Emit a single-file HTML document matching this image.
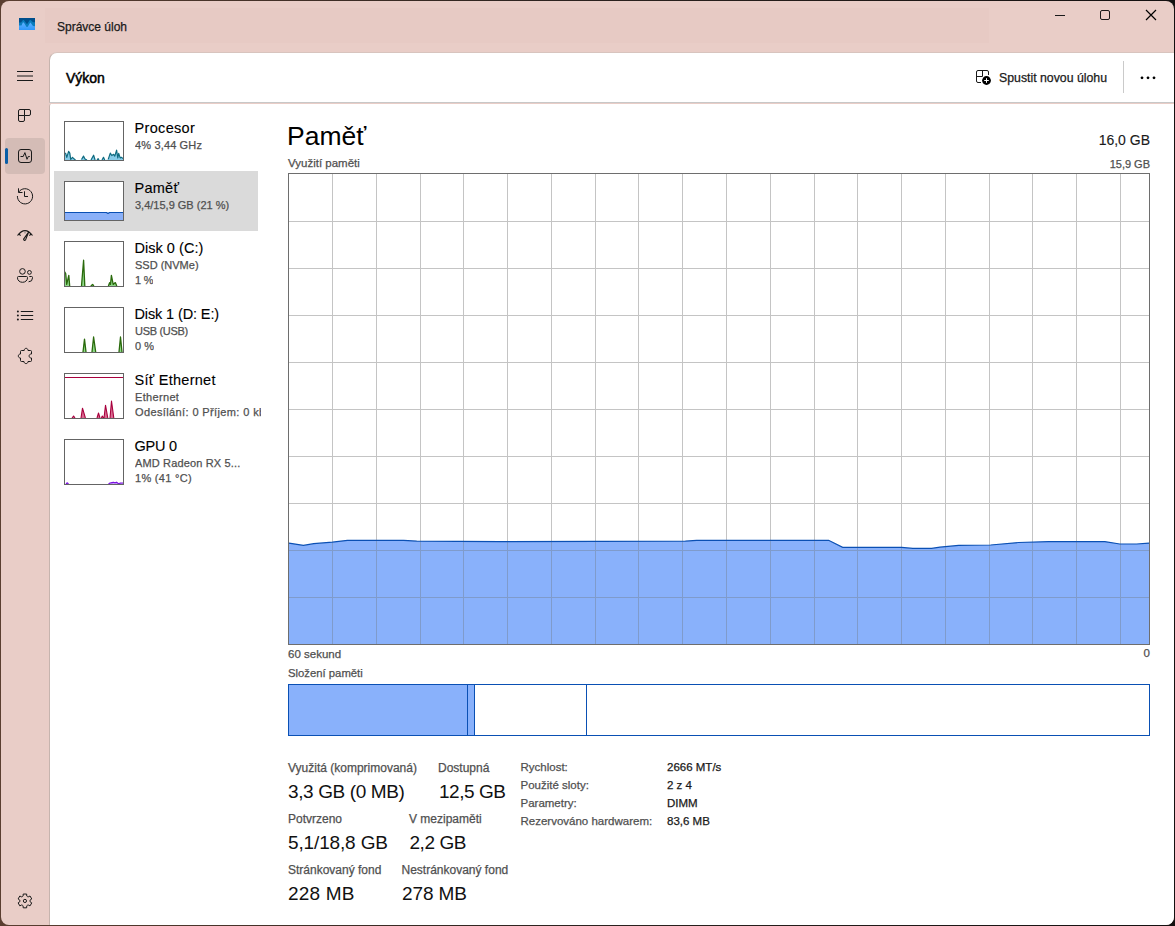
<!DOCTYPE html>
<html><head><meta charset="utf-8">
<style>
html,body{margin:0;padding:0;}
body{width:1175px;height:926px;position:relative;overflow:hidden;background:linear-gradient(90deg,#5a3e30 0%,#2e2420 45%,#141010 100%);font-family:"Liberation Sans",sans-serif;}
.t{position:absolute;line-height:1;white-space:nowrap;-webkit-text-stroke:0.25px currentColor;}
.abs{position:absolute;}
svg{position:absolute;overflow:visible;}
</style></head><body>
<div class="abs" style="left:0;top:0;width:1175px;height:926px;background:#e9cdc7;clip-path:inset(1px round 8px);">
<div class="abs" style="left:45px;top:8px;width:944px;height:35px;background:#e7cac4;"></div>
<svg style="left:0;top:0" width="1175" height="926">
<defs><linearGradient id="ig" x1="0" y1="0" x2="0" y2="1"><stop offset="0" stop-color="#7cc0ff"/><stop offset="1" stop-color="#2f97fb"/></linearGradient></defs>
<rect x="19" y="18" width="16" height="12" fill="url(#ig)"/>
<path d="M19 18 H35 V26.3 L33 26 L31.2 23.5 L30.2 22.5 L27.8 26.8 L26.6 27 L23.8 22.6 L22.8 22.5 L21.5 25.5 L19 25.5 Z" fill="#0a7cbd"/>
<path d="M19 18 H35 V22.3 L33 22.3 L30.6 20 L29.8 20 L27 24.2 L23.8 20 L23 20 L21 22.6 L19 22.6 Z" fill="#004f8c"/>
</svg>
<div class="t" style="left:57px;top:20.84px;font-size:12px;color:#1a1a1a;">Správce úloh</div>
<svg style="left:0;top:0" width="1175" height="926">
<line x1="1055" y1="15.5" x2="1065" y2="15.5" stroke="#1a1a1a" stroke-width="1"/>
<rect x="1100.5" y="10.5" width="9" height="9" rx="1.5" fill="none" stroke="#1a1a1a" stroke-width="1"/>
<path d="M1146 10 L1156 20 M1156 10 L1146 20" stroke="#000" stroke-width="1.2"/>
</svg>
<div class="abs" style="left:5px;top:138px;width:40px;height:36px;background:#d4bcb6;border-radius:4px;"></div>
<div class="abs" style="left:5px;top:148px;width:3px;height:16px;background:#0a5da6;border-radius:2px;"></div>
<svg style="left:0;top:0" width="1175" height="926" fill="none" stroke="#1a1a1a" stroke-width="1">
<path d="M17 71.5 H33 M17 76 H33 M17 80.5 H33"/>
<path d="M20 109.5 H29 Q30.5 109.5 30.5 111 V114 Q30.5 115.5 29 115.5 H24.5 V120 Q24.5 121.5 23 121.5 H20 Q18.5 121.5 18.5 120 V111 Q18.5 109.5 20 109.5 Z M18.5 115.5 H24.5 V109.5"/>
<rect x="18.5" y="149.5" width="13" height="13" rx="2.5"/>
<path d="M20.5 156.5 H23.2 L24.9 152.6 L27 159.3 L28.3 156.5 H29.8"/>
<path d="M18.6 192.2 A7.6 7.6 0 1 1 17.4 196" />
<path d="M18.5 188.3 V192.5 H22.5 M24.5 191.3 V196.5 H28"/>
<path d="M17.5 235.5 Q25 225.6 32.5 235.5" stroke-width="1.2"/>
<path d="M18.8 233.8 L20.6 235.6 M31.2 233.8 L29.4 235.6" stroke-width="1.2"/>
<path d="M25 231.6 V233.4" stroke="#777"/>
<path d="M23.6 239.2 Q24.3 241.2 25.6 239.8 L28.8 231.9 Z" stroke-width="1.1"/>
<circle cx="22.45" cy="271.4" r="2.8"/><circle cx="29.45" cy="272.4" r="1.9"/>
<path d="M18.5 276.5 H26.5 Q27.5 276.5 27.5 277.5 V278 A5 4.3 0 0 1 17.5 278 V277.5 Q17.5 276.5 18.5 276.5 Z"/>
<path d="M29.3 276.5 H31.5 Q32.5 276.5 32.5 277.5 V278 A4 3.8 0 0 1 28.6 281.8"/>
<path d="M21.2 311.5 H32.8 M21.2 315.5 H32.8 M21.2 319.5 H32.8" stroke-linecap="round"/>
<circle cx="17.9" cy="311.5" r="1" fill="#1a1a1a" stroke="none"/><circle cx="17.9" cy="315.5" r="1" fill="#1a1a1a" stroke="none"/><circle cx="17.9" cy="319.5" r="1" fill="#1a1a1a" stroke="none"/>
<path d="M21.5 350.5 H24.2 C24.2 347.6 28 347.6 28 350.5 H30.5 Q31.5 350.5 31.5 351.5 V354 C28.3 353.8 28.3 358.2 31.5 358 V360.5 Q31.5 361.5 30.5 361.5 H28 C28 364.3 24 364.3 24 361.5 H21.5 Q20.5 361.5 20.5 360.5 V358 C17.6 358 17.6 354 20.5 354 V351.5 Q20.5 350.5 21.5 350.5 Z" stroke-linejoin="round"/>
<circle cx="24.93" cy="900.93" r="1.6"/>
<path d="M22.43 896.60 L23.07 896.08 L23.21 894.04 L26.65 894.04 L26.79 896.08 L27.43 896.60 L28.20 896.89 L30.04 896.00 L31.75 898.97 L30.07 900.12 L29.93 900.93 L30.07 901.74 L31.75 902.89 L30.04 905.86 L28.20 904.97 L27.43 905.26 L26.79 905.78 L26.65 907.82 L23.21 907.82 L23.07 905.78 L22.43 905.26 L21.66 904.97 L19.82 905.86 L18.11 902.89 L19.79 901.74 L19.93 900.93 L19.79 900.12 L18.11 898.97 L19.82 896.00 L21.66 896.89 Z" stroke-linejoin="round"/>
</svg>
<div class="abs" style="left:49px;top:52px;width:1130px;height:49px;background:#fff;border-left:1px solid #c6b4ae;border-top:1px solid #d8c4be;border-bottom:1px solid #c8c8c8;border-top-left-radius:8px;"></div>
<div class="abs" style="left:49px;top:104px;width:1130px;height:830px;background:#fff;border-left:1px solid #c6b4ae;border-top-left-radius:2px;"></div>
<div class="t" style="left:66px;top:70.95px;font-size:14px;color:#000;-webkit-text-stroke:0.12px currentColor;-webkit-text-stroke:0.5px #000;">Výkon</div>
<svg style="left:0;top:0" width="1175" height="926" fill="none" stroke="#1a1a1a" stroke-width="1">
<path d="M981 82.5 H978 Q976.5 82.5 976.5 81 V72 Q976.5 70.5 978 70.5 H987 Q988.5 70.5 988.5 72 V75 M976.5 76.5 H982.5 V70.5"/>
<circle cx="986.5" cy="80.5" r="4.4" fill="#000" stroke="none"/>
<path d="M986.5 78.2 V82.8 M984.2 80.5 H988.8" stroke="#fff"/>
<line x1="1123.5" y1="61" x2="1123.5" y2="93" stroke="#cacaca"/>
<circle cx="1142" cy="77.8" r="1.4" fill="#000" stroke="none"/>
<circle cx="1148" cy="77.8" r="1.4" fill="#000" stroke="none"/>
<circle cx="1154" cy="77.8" r="1.4" fill="#000" stroke="none"/>
</svg>
<div class="t" style="left:999px;top:71.59px;font-size:12.3px;color:#1a1a1a;">Spustit novou úlohu</div>
<div class="abs" style="left:54px;top:171px;width:204px;height:60px;background:#dadada;"></div>
<svg style="left:0;top:0" width="1175" height="926"><defs><clipPath id="tc121"><rect x="65" y="122" width="58" height="38"/></clipPath></defs><rect x="64" y="121" width="60" height="40" fill="#fff"/><g clip-path="url(#tc121)"><path d="M65.0 153.0 L65.7 153.4 L66.8 157.3 L68.6 151.3 L69.8 153.1 L70.7 159.4 L72.5 157.3 L74.3 159.1 L75.5 160.0 L80.0 160.0 L81.5 159.5 L83.5 156.1 L85.0 159.0 L87.0 160.0 L91.0 160.0 L93.6 155.2 L95.1 160.0 L97.0 160.0 L98.1 158.6 L99.0 160.0 L102.0 160.0 L103.5 157.3 L104.7 160.0 L108.2 159.4 L110.3 153.1 L111.8 155.5 L113.6 154.3 L114.8 156.1 L116.6 150.1 L117.8 157.9 L118.7 153.4 L120.2 157.9 L121.3 157.3 L123.0 158.5 L123.0 160 L65.0 160 Z" fill="#86cbe8"/><path d="M65.0 153.0 L65.7 153.4 L66.8 157.3 L68.6 151.3 L69.8 153.1 L70.7 159.4 L72.5 157.3 L74.3 159.1 L75.5 160.0 M80.0 160.0 M81.5 159.5 L83.5 156.1 L85.0 159.0 L87.0 160.0 M91.0 160.0 L93.6 155.2 L95.1 160.0 M97.0 160.0 L98.1 158.6 L99.0 160.0 M102.0 160.0 L103.5 157.3 L104.7 160.0 M108.2 159.4 L110.3 153.1 L111.8 155.5 L113.6 154.3 L114.8 156.1 L116.6 150.1 L117.8 157.9 L118.7 153.4 L120.2 157.9 L121.3 157.3 L123.0 158.5" fill="none" stroke="#0f6b80" stroke-width="1.2" stroke-linejoin="round"/></g><rect x="64.5" y="121.5" width="59" height="39" fill="none" stroke="#646464" stroke-width="1"/></svg>
<svg style="left:0;top:0" width="1175" height="926"><defs><clipPath id="tc181"><rect x="65" y="182" width="58" height="38"/></clipPath></defs><rect x="64" y="181" width="60" height="40" fill="#fff"/><g clip-path="url(#tc181)"><path d="M65.0 212.5 L106.5 212.5 L108.0 213.5 L109.5 212.5 L123.0 212.5 L123.0 220 L65.0 220 Z" fill="#8ab0f8"/><path d="M65.0 212.5 L106.5 212.5 L108.0 213.5 L109.5 212.5 L123.0 212.5" fill="none" stroke="#0a50b4" stroke-width="1.2" stroke-linejoin="round"/></g><rect x="64.5" y="181.5" width="59" height="39" fill="none" stroke="#646464" stroke-width="1"/></svg>
<svg style="left:0;top:0" width="1175" height="926"><defs><clipPath id="tc241"><rect x="65" y="242" width="58" height="44"/></clipPath></defs><rect x="64" y="241" width="60" height="46" fill="#fff"/><g clip-path="url(#tc241)"><path d="M64.5 271.7 L65.7 273.5 L66.7 284.4 L68.8 275.3 L69.7 286.0 L81.5 286.0 L83.6 260.2 L84.8 286.0 L90.8 286.0 L92.6 284.4 L93.9 286.0 L108.4 286.0 L109.6 282.6 L110.5 284.4 L111.4 275.3 L113.2 284.4 L115.3 282.6 L116.8 286.0 L116.8 286 L64.5 286 Z" fill="#8fd88a"/><path d="M64.5 271.7 L65.7 273.5 L66.7 284.4 L68.8 275.3 L69.7 286.0 M81.5 286.0 L83.6 260.2 L84.8 286.0 M90.8 286.0 L92.6 284.4 L93.9 286.0 M108.4 286.0 L109.6 282.6 L110.5 284.4 L111.4 275.3 L113.2 284.4 L115.3 282.6 L116.8 286.0" fill="none" stroke="#2a6a0c" stroke-width="1.3" stroke-linejoin="round"/></g><rect x="64.5" y="241.5" width="59" height="45" fill="none" stroke="#646464" stroke-width="1"/></svg>
<svg style="left:0;top:0" width="1175" height="926"><defs><clipPath id="tc307"><rect x="65" y="308" width="58" height="44"/></clipPath></defs><rect x="64" y="307" width="60" height="46" fill="#fff"/><g clip-path="url(#tc307)"><path d="M83.0 352.0 L84.5 339.2 L86.0 352.0 L92.0 352.0 L93.6 337.0 L95.7 352.0 L119.0 352.0 L120.5 337.0 L122.0 352.0 L122.0 352 L83.0 352 Z" fill="#8fd88a"/><path d="M83.0 352.0 L84.5 339.2 L86.0 352.0 M92.0 352.0 L93.6 337.0 L95.7 352.0 M119.0 352.0 L120.5 337.0 L122.0 352.0" fill="none" stroke="#2a6a0c" stroke-width="1.3" stroke-linejoin="round"/></g><rect x="64.5" y="307.5" width="59" height="45" fill="none" stroke="#646464" stroke-width="1"/></svg>
<svg style="left:0;top:0" width="1175" height="926"><defs><clipPath id="tc373"><rect x="65" y="374" width="58" height="44"/></clipPath></defs><rect x="64" y="373" width="60" height="46" fill="#fff"/><g clip-path="url(#tc373)"><path d="M72.0 418.0 L73.6 416.0 L75.0 418.0 L81.0 418.0 L82.5 408.2 L85.4 418.0 L97.0 418.0 L98.5 413.0 L100.0 418.0 L101.4 418.0 L102.3 416.0 L103.5 418.0 L104.0 418.0 L105.5 405.2 L107.8 418.0 L110.0 418.0 L111.5 401.0 L113.8 418.0 L113.8 418 L72.0 418 Z" fill="#d86a90"/><path d="M72.0 418.0 L73.6 416.0 L75.0 418.0 M81.0 418.0 L82.5 408.2 L85.4 418.0 M97.0 418.0 L98.5 413.0 L100.0 418.0 M101.4 418.0 L102.3 416.0 L103.5 418.0 M104.0 418.0 L105.5 405.2 L107.8 418.0 M110.0 418.0 L111.5 401.0 L113.8 418.0" fill="none" stroke="#a8003d" stroke-width="1.1" stroke-linejoin="round"/><line x1="65" y1="377.5" x2="123" y2="377.5" stroke="#a8003d" stroke-width="1"/></g><rect x="64.5" y="373.5" width="59" height="45" fill="none" stroke="#646464" stroke-width="1"/></svg>
<svg style="left:0;top:0" width="1175" height="926"><defs><clipPath id="tc439"><rect x="65" y="440" width="58" height="44"/></clipPath></defs><rect x="64" y="439" width="60" height="46" fill="#fff"/><g clip-path="url(#tc439)"><path d="M66.0 484.0 L67.3 482.8 L68.5 484.0 L108.5 484.0 L110.0 483.0 L112.0 482.6 L113.5 482.3 L115.0 482.8 L116.5 482.2 L118.0 483.2 L119.5 484.0 L120.0 483.0 L123.0 483.0 L123.0 484 L66.0 484 Z" fill="#c8a0f8"/><path d="M66.0 484.0 L67.3 482.8 L68.5 484.0 M108.5 484.0 L110.0 483.0 L112.0 482.6 L113.5 482.3 L115.0 482.8 L116.5 482.2 L118.0 483.2 L119.5 484.0 L120.0 483.0 L123.0 483.0" fill="none" stroke="#7a10e0" stroke-width="1.2" stroke-linejoin="round"/></g><rect x="64.5" y="439.5" width="59" height="45" fill="none" stroke="#646464" stroke-width="1"/></svg>
<div class="t" style="left:134.5px;top:120.73px;font-size:14.5px;color:#000;letter-spacing:0.33px;-webkit-text-stroke:0.12px currentColor;">Procesor</div>
<div class="t" style="left:135px;top:139.69px;font-size:11px;color:#505050;letter-spacing:0.15px;max-width:126px;overflow:hidden;">4% 3,44 GHz</div>
<div class="t" style="left:134.5px;top:180.73px;font-size:14.5px;color:#000;letter-spacing:0.27px;-webkit-text-stroke:0.12px currentColor;">Paměť</div>
<div class="t" style="left:135px;top:199.69px;font-size:11px;color:#505050;max-width:126px;overflow:hidden;">3,4/15,9 GB (21 %)</div>
<div class="t" style="left:134.5px;top:240.73px;font-size:14.5px;color:#000;letter-spacing:0.03px;-webkit-text-stroke:0.12px currentColor;">Disk 0 (C:)</div>
<div class="t" style="left:135px;top:259.69px;font-size:11px;color:#505050;max-width:126px;overflow:hidden;">SSD (NVMe)</div>
<div class="t" style="left:135px;top:274.69px;font-size:11px;color:#505050;letter-spacing:-0.2px;max-width:126px;overflow:hidden;">1 %</div>
<div class="t" style="left:134.5px;top:306.73px;font-size:14.5px;color:#000;letter-spacing:-0.12px;-webkit-text-stroke:0.12px currentColor;">Disk 1 (D: E:)</div>
<div class="t" style="left:135px;top:325.69px;font-size:11px;color:#505050;letter-spacing:-0.3px;max-width:126px;overflow:hidden;">USB (USB)</div>
<div class="t" style="left:135px;top:340.69px;font-size:11px;color:#505050;max-width:126px;overflow:hidden;">0 %</div>
<div class="t" style="left:134.5px;top:372.73px;font-size:14.5px;color:#000;letter-spacing:0.27px;-webkit-text-stroke:0.12px currentColor;">Síť Ethernet</div>
<div class="t" style="left:135px;top:391.69px;font-size:11px;color:#505050;letter-spacing:0.33px;max-width:126px;overflow:hidden;">Ethernet</div>
<div class="t" style="left:135px;top:406.69px;font-size:11px;color:#505050;letter-spacing:0.38px;max-width:126px;overflow:hidden;">Odesílání: 0 Příjem: 0 kb</div>
<div class="t" style="left:134.5px;top:438.73px;font-size:14.5px;color:#000;letter-spacing:-0.25px;-webkit-text-stroke:0.12px currentColor;">GPU 0</div>
<div class="t" style="left:135px;top:457.69px;font-size:11px;color:#505050;letter-spacing:0.15px;max-width:126px;overflow:hidden;">AMD Radeon RX 5...</div>
<div class="t" style="left:135px;top:472.69px;font-size:11px;color:#505050;letter-spacing:0.3px;max-width:126px;overflow:hidden;">1% (41 °C)</div>
<div class="t" style="left:287px;top:122.57px;font-size:26.5px;color:#000;-webkit-text-stroke:0;">Paměť</div>
<div class="t" style="right:25px;top:133.15px;font-size:14px;color:#1a1a1a;-webkit-text-stroke:0.12px currentColor;">16,0 GB</div>
<div class="t" style="left:288px;top:158.27px;font-size:11.5px;color:#505050;">Využití paměti</div>
<div class="t" style="right:25px;top:158.69px;font-size:11px;color:#505050;">15,9 GB</div>
<svg style="left:0;top:0" width="1175" height="926"><defs><clipPath id="fc"><path d="M289.0 543.1 L303.4 545.4 L313.7 543.7 L332.4 542.2 L347.4 540.3 L403.6 540.3 L416.7 541.2 L500.0 541.6 L685.4 541.2 L696.6 540.3 L828.6 540.3 L842.7 547.4 L901.6 547.4 L912.9 548.4 L931.6 548.4 L940.0 547.2 L958.7 545.4 L990.6 545.0 L1018.7 542.5 L1048.6 541.6 L1104.8 541.6 L1119.8 544.0 L1136.6 544.0 L1149.0 543.1 L1149 644 L289 644 Z"/></clipPath></defs><path d="M332.5 174 V644 M376.5 174 V644 M420.5 174 V644 M463.5 174 V644 M507.5 174 V644 M551.5 174 V644 M595.5 174 V644 M638.5 174 V644 M682.5 174 V644 M726.5 174 V644 M770.5 174 V644 M814.5 174 V644 M857.5 174 V644 M901.5 174 V644 M945.5 174 V644 M989.5 174 V644 M1032.5 174 V644 M1076.5 174 V644 M1120.5 174 V644 M289 221.5 H1149 M289 268.5 H1149 M289 315.5 H1149 M289 362.5 H1149 M289 409.5 H1149 M289 456.5 H1149 M289 503.5 H1149 M289 550.5 H1149 M289 597.5 H1149" stroke="#c4c4c4" stroke-width="1" fill="none"/><path d="M289.0 543.1 L303.4 545.4 L313.7 543.7 L332.4 542.2 L347.4 540.3 L403.6 540.3 L416.7 541.2 L500.0 541.6 L685.4 541.2 L696.6 540.3 L828.6 540.3 L842.7 547.4 L901.6 547.4 L912.9 548.4 L931.6 548.4 L940.0 547.2 L958.7 545.4 L990.6 545.0 L1018.7 542.5 L1048.6 541.6 L1104.8 541.6 L1119.8 544.0 L1136.6 544.0 L1149.0 543.1 L1149 644 L289 644 Z" fill="#89b1fb"/><path d="M332.5 174 V644 M376.5 174 V644 M420.5 174 V644 M463.5 174 V644 M507.5 174 V644 M551.5 174 V644 M595.5 174 V644 M638.5 174 V644 M682.5 174 V644 M726.5 174 V644 M770.5 174 V644 M814.5 174 V644 M857.5 174 V644 M901.5 174 V644 M945.5 174 V644 M989.5 174 V644 M1032.5 174 V644 M1076.5 174 V644 M1120.5 174 V644 M289 221.5 H1149 M289 268.5 H1149 M289 315.5 H1149 M289 362.5 H1149 M289 409.5 H1149 M289 456.5 H1149 M289 503.5 H1149 M289 550.5 H1149 M289 597.5 H1149" stroke="#7f9bcb" stroke-width="1" fill="none" clip-path="url(#fc)"/><path d="M289.0 543.1 L303.4 545.4 L313.7 543.7 L332.4 542.2 L347.4 540.3 L403.6 540.3 L416.7 541.2 L500.0 541.6 L685.4 541.2 L696.6 540.3 L828.6 540.3 L842.7 547.4 L901.6 547.4 L912.9 548.4 L931.6 548.4 L940.0 547.2 L958.7 545.4 L990.6 545.0 L1018.7 542.5 L1048.6 541.6 L1104.8 541.6 L1119.8 544.0 L1136.6 544.0 L1149.0 543.1" fill="none" stroke="#0b50b4" stroke-width="1.2"/><rect x="288.5" y="173.5" width="861" height="471" fill="none" stroke="#6e6e6e" stroke-width="1"/><rect x="289" y="685" width="178" height="50" fill="#89b1fb"/><rect x="468" y="685" width="6" height="50" fill="#89b1fb"/><rect x="288.5" y="684.5" width="861" height="51" fill="none" stroke="#0a50b4" stroke-width="1"/><path d="M467.5 685 V735 M474.5 685 V735 M586.5 685 V735" stroke="#0a50b4" stroke-width="1"/></svg>
<div class="t" style="left:288px;top:648.77px;font-size:11.5px;color:#505050;">60 sekund</div>
<div class="t" style="right:25px;top:648.27px;font-size:11.5px;color:#505050;">0</div>
<div class="t" style="left:288px;top:667.73px;font-size:11.3px;color:#505050;">Složení paměti</div>
<div class="t" style="left:288px;top:761.84px;font-size:12px;color:#505050;">Využitá (komprimovaná)</div>
<div class="t" style="left:288px;top:782.42px;font-size:19px;color:#111;letter-spacing:-0.38px;-webkit-text-stroke:0;">3,3 GB (0 MB)</div>
<div class="t" style="left:438px;top:761.84px;font-size:12px;color:#505050;">Dostupná</div>
<div class="t" style="left:439px;top:782.42px;font-size:19px;color:#111;letter-spacing:-0.45px;-webkit-text-stroke:0;">12,5 GB</div>
<div class="t" style="left:288px;top:812.84px;font-size:12px;color:#505050;">Potvrzeno</div>
<div class="t" style="left:288px;top:833.12px;font-size:19px;color:#111;letter-spacing:-0.14px;-webkit-text-stroke:0;">5,1/18,8 GB</div>
<div class="t" style="left:409px;top:812.84px;font-size:12px;color:#505050;">V mezipaměti</div>
<div class="t" style="left:409.5px;top:833.12px;font-size:19px;color:#111;letter-spacing:-0.45px;-webkit-text-stroke:0;">2,2 GB</div>
<div class="t" style="left:288px;top:863.84px;font-size:12px;color:#505050;">Stránkovaný fond</div>
<div class="t" style="left:288px;top:883.52px;font-size:19px;color:#111;letter-spacing:0.2px;-webkit-text-stroke:0;">228 MB</div>
<div class="t" style="left:401.5px;top:863.84px;font-size:12px;color:#505050;">Nestránkovaný fond</div>
<div class="t" style="left:402px;top:883.52px;font-size:19px;color:#111;letter-spacing:-0.12px;-webkit-text-stroke:0;">278 MB</div>
<div class="t" style="left:520.5px;top:762.27px;font-size:11.5px;color:#505050;">Rychlost:</div>
<div class="t" style="left:667px;top:762.27px;font-size:11.5px;color:#1a1a1a;">2666 MT/s</div>
<div class="t" style="left:520.5px;top:780.27px;font-size:11.5px;color:#505050;">Použité sloty:</div>
<div class="t" style="left:667px;top:780.27px;font-size:11.5px;color:#1a1a1a;">2 z 4</div>
<div class="t" style="left:520.5px;top:798.27px;font-size:11.5px;color:#505050;">Parametry:</div>
<div class="t" style="left:667px;top:798.27px;font-size:11.5px;color:#1a1a1a;">DIMM</div>
<div class="t" style="left:520.5px;top:816.27px;font-size:11.5px;color:#505050;">Rezervováno hardwarem:</div>
<div class="t" style="left:667px;top:816.27px;font-size:11.5px;color:#1a1a1a;">83,6 MB</div>
</div></body></html>
